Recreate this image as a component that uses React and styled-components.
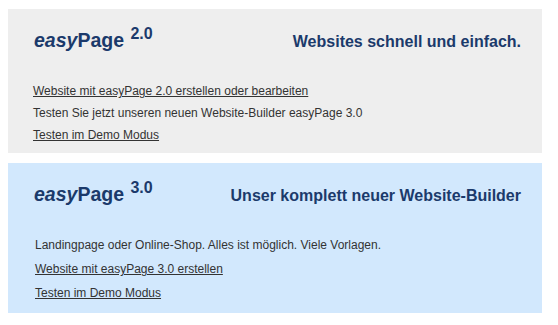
import React from "react";
import styled, { createGlobalStyle } from "styled-components";

const GlobalStyle = createGlobalStyle`
  body {
    margin: 8px;
    background: #ffffff;
    font-family: "Liberation Sans", Arial, sans-serif;
    color: #333333;
  }
`;

const products = [
  {
    version: "2.0",
    slogan: "Websites schnell und einfach.",
    bg: "#eeeeee",
    lineHeight: 22,
    gap: 28,
    bottom: 7,
    indent: 0,
    lines: [
      { text: "Website mit easyPage 2.0 erstellen oder bearbeiten", link: true },
      { text: "Testen Sie jetzt unseren neuen Website-Builder easyPage 3.0" },
      { text: "Testen im Demo Modus", link: true },
    ],
  },
  {
    version: "3.0",
    slogan: "Unser komplett neuer Website-Builder",
    bg: "#d2e8fd",
    lineHeight: 24,
    gap: 27,
    bottom: 8,
    indent: 2,
    lines: [
      { text: "Landingpage oder Online-Shop. Alles ist möglich. Viele Vorlagen." },
      { text: "Website mit easyPage 3.0 erstellen", link: true },
      { text: "Testen im Demo Modus", link: true },
    ],
  },
];

const App = () => {
  return (
    <>
      <GlobalStyle />
      <Wrapper>
        {products.map((p) => (
          <Panel key={p.version} $bg={p.bg} $bottom={p.bottom}>
            <Header>
              <Logo>
                <em>easy</em>Page <Version>{p.version}</Version>
              </Logo>
              <Slogan>{p.slogan}</Slogan>
            </Header>
            <Lines $gap={p.gap} $lineHeight={p.lineHeight} $indent={p.indent}>
              {p.lines.map((l, i) =>
                l.link ? (
                  <Line key={i}>
                    <TextLink href="#">{l.text}</TextLink>
                  </Line>
                ) : (
                  <Line key={i}>{l.text}</Line>
                )
              )}
            </Lines>
          </Panel>
        ))}
      </Wrapper>
    </>
  );
};

export default App;

const Wrapper = styled.div`
  width: 534px;
  display: flex;
  flex-direction: column;
  gap: 10px;
  padding-top: 1px;
`;

const Panel = styled.section`
  background: ${(p) => p.$bg};
  padding: 19px 21px ${(p) => p.$bottom}px 25px;
`;

const Header = styled.div`
  display: flex;
  justify-content: space-between;
  align-items: baseline;
  height: 24px;
  color: #1b3a6b;
`;

const Logo = styled.h1`
  margin: 0 0 0 1px;
  font-size: 19.5px;
  line-height: 24px;
  font-weight: bold;

  em {
    font-style: italic;
  }
`;

const Version = styled.span`
  margin-left: 1px;
  font-size: 16px;
  line-height: 0;
  vertical-align: 8px;
`;

const Slogan = styled.h2`
  margin: 0;
  font-size: 16px;
  line-height: 24px;
  font-weight: bold;
`;

const Lines = styled.div`
  margin-top: ${(p) => p.$gap}px;
  padding-left: ${(p) => p.$indent}px;
  font-size: 12px;
  line-height: ${(p) => p.$lineHeight}px;
`;

const Line = styled.div`
  color: #333333;
`;

const TextLink = styled.a`
  color: #333333;
  text-decoration: underline;
`;
